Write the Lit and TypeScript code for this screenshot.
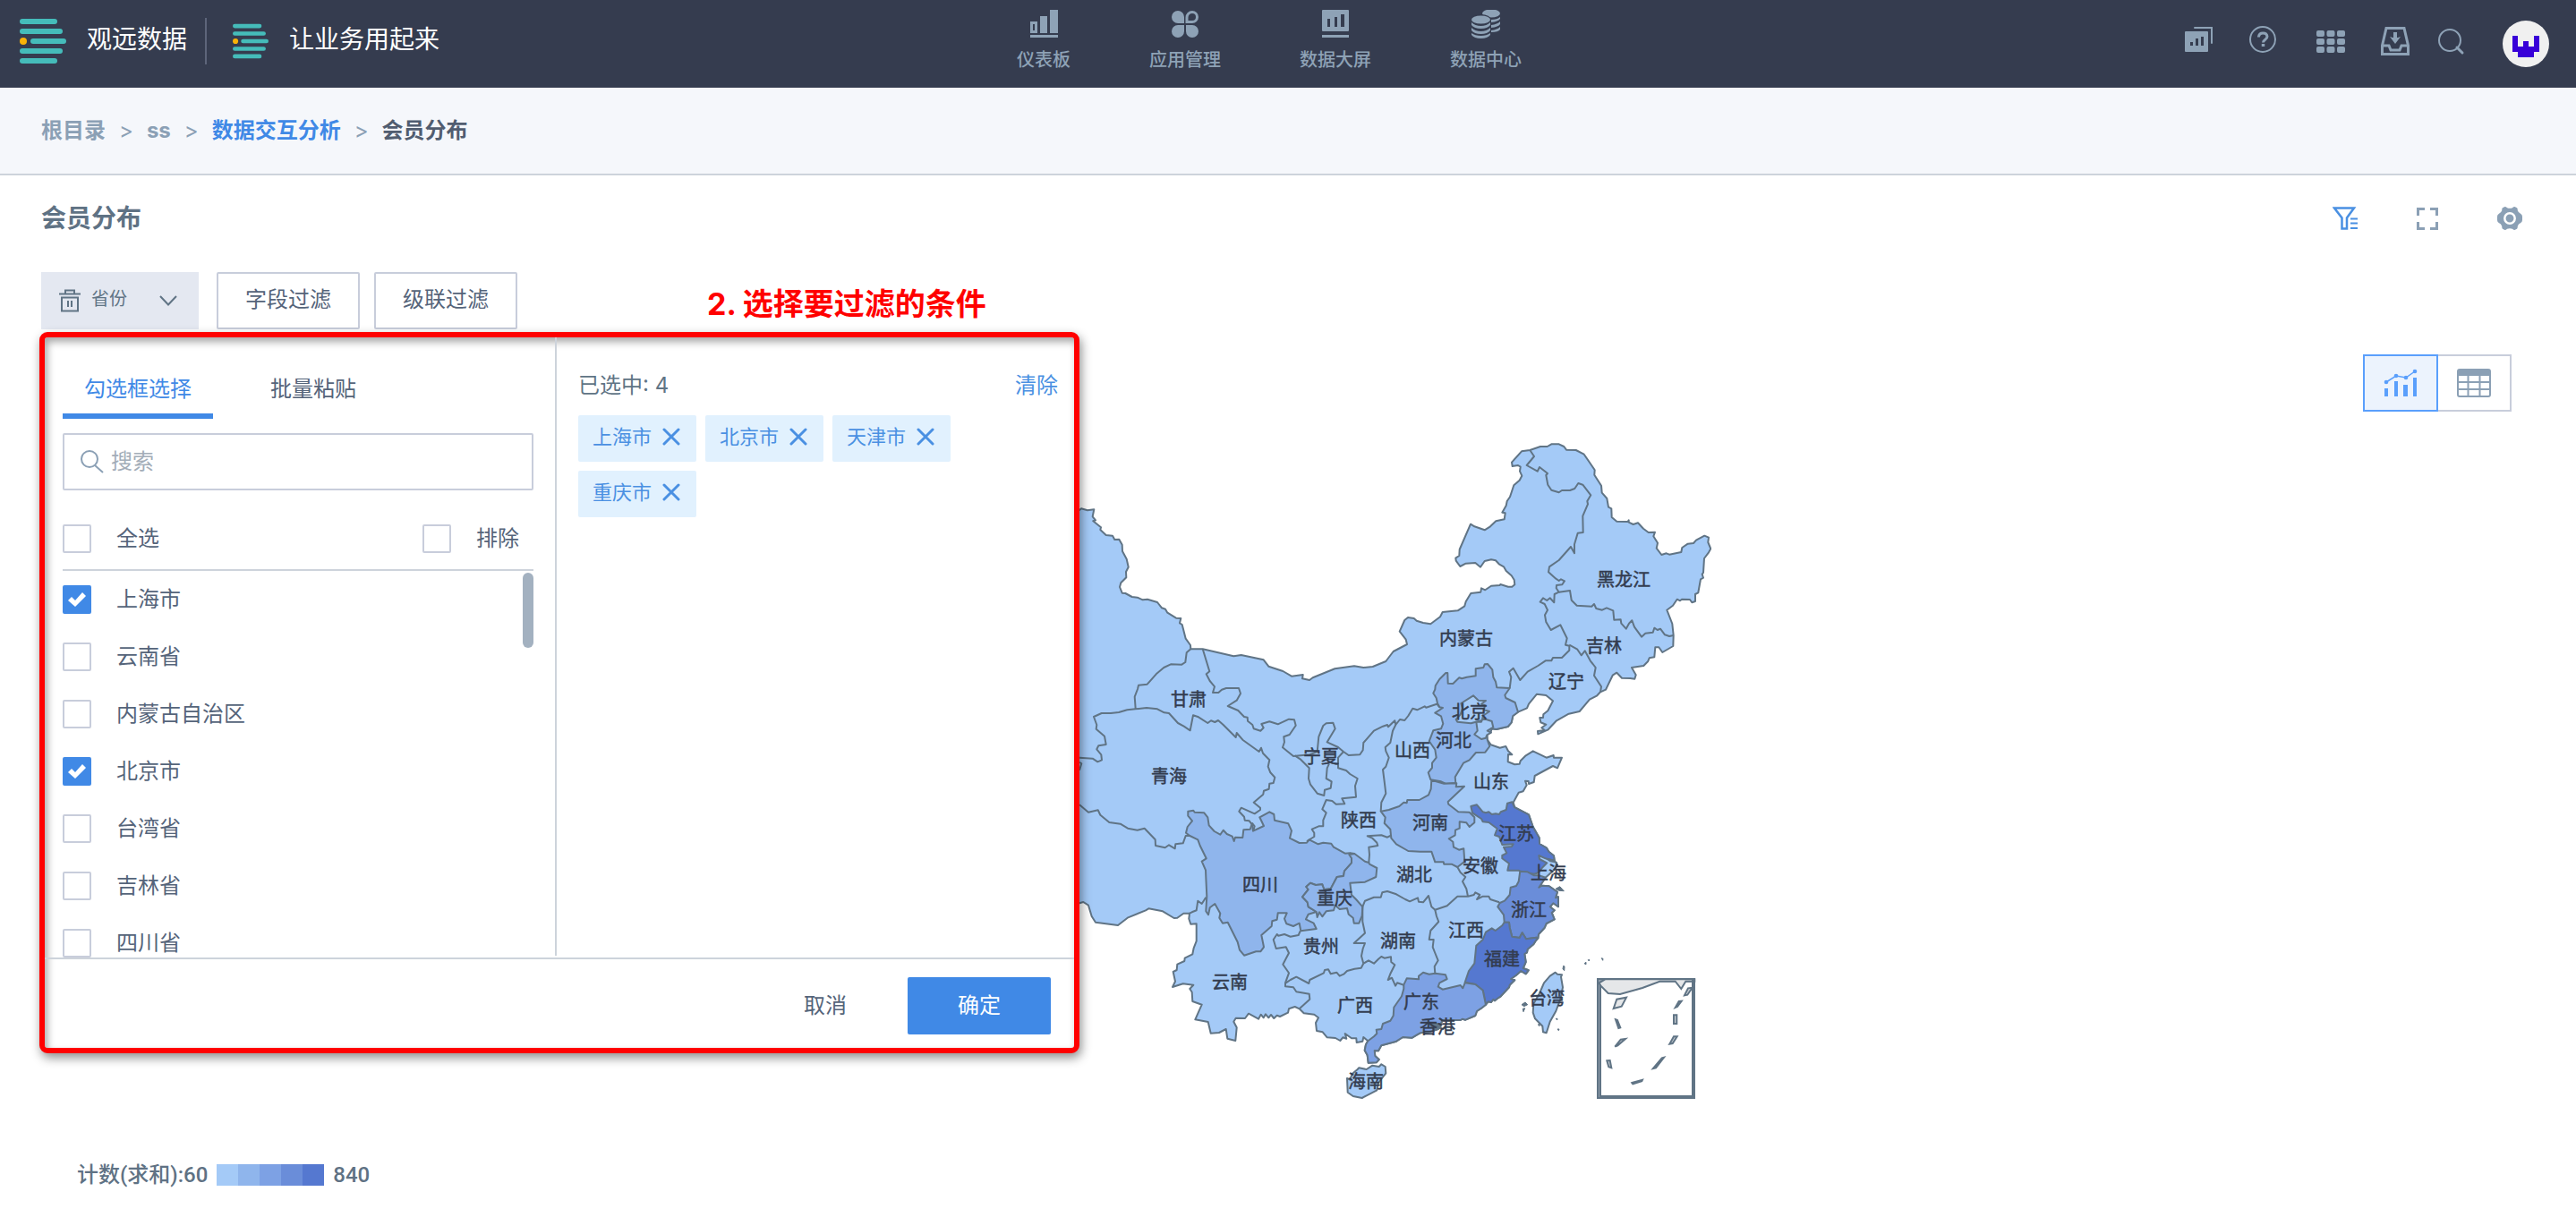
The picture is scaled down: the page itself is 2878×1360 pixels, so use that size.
import { LitElement, html, svg, css } from "lit";
import { customElement, property, state } from "lit/decorators.js";
import { classMap } from "lit/directives/class-map.js";

/* ---------- map geometry ---------- */

// Survey sheets: each has an origin on the map canvas, points are in thirds of a unit.
type Sheet = "W" | "N" | "E" | "S";
const ORIGIN: Record<Sheet, [number, number]> = {
  W: [1200, 540],
  N: [1560, 480],
  E: [1560, 820],
  S: [1280, 980],
};

// "W 18,90 24,85 N 12,678 ..." -> "1206,570 1208,568.3 ..."
function trace(source: string): string {
  let origin = ORIGIN.W;
  const out: string[] = [];
  for (const token of source.trim().split(/\s+/)) {
    if (token in ORIGIN) {
      origin = ORIGIN[token as Sheet];
      continue;
    }
    const [x, y] = token.split(",").map(Number);
    out.push(`${(origin[0] + x / 3).toFixed(1)},${(origin[1] + y / 3).toFixed(1)}`);
  }
  return out.join(" ");
}

const LEVELS = ["#a4caf7", "#8fb5ec", "#7da1e4", "#6a8dd9", "#5578d0"];

const MAINLAND = trace(`W -40,90 18,90 24,85 45,91 67,88 62,112 72,124 64,127 90,148 88,156 107,174 129,176 136,189 151,188
161,206 162,228 176,254 182,281 174,297 175,316 157,334 153,348 161,368 172,369 194,381 212,383 230,391 246,389 279,399
294,418 306,422 313,434 342,452 358,453 354,469 362,474 374,521 390,543 391,556 431,556 535,580 560,576 635,592 652,614
700,630 729,647 767,642 765,655 789,660 800,652 874,622 939,613 970,618 1001,615 1045,597 1070,564 1116,540 1112,524
1091,497 1108,459 1119,450 1139,453 1148,461 1170,468 1195,472
N 147,628 155,612 206,607 229,592 233,577 250,549 283,545 285,532 298,538 318,524 347,522 349,519 375,527 388,527 397,520
395,504 386,490 368,474 360,460 344,451 333,439 318,436 296,441 282,461 265,447 233,449 214,459 200,440 199,431 211,423
212,402 249,317 262,325 296,337 315,325 334,307 362,301 365,280 355,278 368,255 371,240 381,226 394,187 413,170 421,155
414,140 416,125 408,120 389,123 387,110 420,73 448,69 483,57 506,57 520,49 545,49 562,57 570,68 602,69 629,83 654,119
665,136 664,152 687,188 689,212 706,231 711,260 721,265 722,294 739,308 776,309 779,304 779,311 794,318 810,313 828,332
845,345 867,344 862,358 876,380 872,398 889,420 905,415 915,419 955,411 958,396 977,383 996,381 1005,371 1033,356
1047,362 1045,378 1054,400 1047,412 1032,432 1029,480 1025,485 1029,497 1020,502 1012,547 1002,552 1002,576 991,580
984,570 957,569 951,574 941,569 927,590 907,605 925,651 929,690 928,726 892,747 880,730 868,730 865,763 848,766 843,778
829,792 789,798 803,823 799,836 784,834 756,833 739,815 725,824 702,872 684,880 673,892 648,905 614,945 578,953 537,976
509,1006 475,1021 474,1011 497,1008 487,1000 502,989 484,982 481,966 492,966 493,955 508,943 525,910 502,891 471,887
444,920 438,934 408,947 391,960 386,982 374,996 335,1005 320,1003 316,1014 304,1020 305,1040 317,1057 347,1067 367,1062
375,1078 388,1090 375,1089 374,1114 397,1123 413,1121 416,1111 434,1093 458,1078 503,1100 527,1092 528,1100 555,1100
E 540,115 525,108 464,141 461,162 444,168 443,159 432,158 437,172 425,193 410,197 392,230 397,247 444,271 458,312 479,349
480,369 504,383 511,395 528,409 530,425 540,440 530,455 500,482 478,515 488,509 512,511 540,530 534,550 543,547 543,580
526,568 515,580 530,592 521,600 530,622 503,636 497,650 477,672 475,685 468,693 460,706 440,722 438,733 430,738 434,765
425,786 443,793 434,805 418,795 401,810 384,822 397,826 380,842 378,850 350,880 338,888 330,895 325,890 318,900 308,898
300,908 285,920 270,930 265,945 232,959 222,956 215,960 155,960 140,990 110,1000 80,1003 68,1010 53,1019 22,1017 0,1031
S 790,565 780,583 767,582 769,600 782,612 773,622 746,623 743,598 734,581 738,562 745,550 730,537 727,551 707,555
706,541 690,541 668,525 673,542 661,538 652,549 636,540 608,538 593,520 573,516 570,489 579,472 565,461 530,457 515,442
500,435 480,442 477,455 450,468 440,464 430,474 420,462 412,472 402,460 395,472 386,461 378,476 345,458 333,474 302,473
295,485 305,505 301,549 274,542 269,510 246,522 218,524 209,486 166,478 188,428 157,417 155,386 148,375 160,362 125,358
90,369 99,350 92,318 104,312 106,293 130,282 131,272 157,259 161,238 170,215 170,157 151,158 145,140 147,122 127,122
106,137 95,138 57,115 10,106 W 240,1432 179,1457 147,1482 72,1472 59,1452 48,1415 31,1404 18,1408 -40,1404`);

interface Region {
  level: number;
  points: string;
}

const REGIONS: Region[] = [
  { level: 1, points: trace(`N 172,816 166,816 145,837 131,859 130,871 124,884 134,900 138,918 145,931 156,933 130,950 150,961
    157,986 150,1003 124,1009 110,1045 130,1073 134,1100 120,1118 120,1134 107,1150 115,1174 150,1180 165,1187 199,1185
    197,1165 225,1118 245,1108 267,1083 298,1082 313,1062 305,1040 304,1020 316,1014 320,1003 335,1005 374,996 386,982
    391,960 408,947 398,915 367,900 364,890 380,867 337,865 333,845 325,830 322,805 306,786 296,787 292,798 266,802
    266,826 236,830 220,835 211,832 190,852 173,851`) },
  { level: 0, points: trace(`N 258,892 275,908 300,909 285,920 297,925 294,940 312,945 290,960 288,975 250,985 205,980 200,972
    215,955 222,935 217,918`) },
  { level: 0, points: trace(`N 262,1022 272,1010 268,980 285,980 290,968 320,978 325,998 305,1010 318,1016 304,1024 300,1034 285,1038`) },
  { level: 1, points: trace(`W 382,1100 400,1097 404,1103 436,1105 448,1120 452,1147 470,1167 490,1178 500,1163 512,1176
    530,1184 536,1200 540,1187 565,1188 568,1162 590,1160 597,1140 605,1150 600,1166 636,1149 622,1120 655,1102 670,1110
    672,1130 718,1141 729,1165 723,1190 755,1206 780,1205 788,1195 818,1210 835,1205 862,1208 870,1220 908,1241 925,1240
    930,1257 930,1273 906,1300 903,1317 881,1320 860,1360 838,1362 832,1345 810,1347 792,1340 778,1353 785,1362 765,1387
    782,1405 785,1420 812,1437
    S 545,125 537,142 563,155 572,174 520,181 515,155 495,165 472,157 465,140 473,121 443,121 440,143 424,148 422,165
    388,195 396,235 385,250 370,250 330,263 315,245 308,218 275,152 258,155 247,137 250,122 232,90 215,103 210,127
    202,115 205,65 W 442,1320 441,1297 428,1268 443,1258 422,1215 415,1195 388,1182 375,1172 380,1152 396,1132 382,1115`) },
  { level: 1, points: trace(`W 881,1320 903,1317 906,1300 930,1273 930,1257 922,1245 940,1242 975,1268 988,1272 990,1277
    1015,1290 1012,1320 975,1337 925,1340 930,1380 945,1395 967,1420 965,1450 955,1475 938,1475 935,1457 920,1445
    915,1425 890,1428 875,1415 870,1432 845,1435 832,1453 822,1438 815,1455 812,1437 785,1420 782,1405 765,1387 785,1362
    778,1353 792,1340 810,1347 832,1345 838,1362 860,1360`) },
  { level: 1, points: trace(`E 118,155 160,167 202,166 200,178 228,176 173,228 175,236 208,262 245,263 262,280 262,298 245,312
    235,298 212,295 212,317 198,323 197,340 176,352 190,362 192,380 210,389 226,385 229,428 205,447 185,437 160,437
    158,430 130,430 118,395 80,395 40,393 0,370 W 1063,1190 1060,1160 1040,1140 1043,1120 1028,1100 1055,1095 1090,1083
    1105,1070 1115,1072 1117,1062 E 77,222 108,205 116,185`) },
  { level: 4, points: trace(`E 250,243 270,238 290,262 300,265 310,262 320,270 333,268 345,270 350,262 368,255 372,233 388,229
    396,246 444,271 458,312 479,349 480,369 504,383 511,395 528,409 530,425 500,418 478,408 480,420 505,433 488,450
    478,465 462,470 415,461 410,458 373,458 378,435 355,418 355,408 370,400 360,380 387,378 392,370 355,372 345,345
    330,340 338,318 310,297 290,295 285,285 255,265`) },
  { level: 3, points: trace(`E 415,461 440,463 462,475 478,475 500,482 478,515 488,509 512,511 540,530 534,550 543,547 543,580
    526,568 515,580 530,592 521,600 530,622 503,636 497,650 477,672 475,685 470,683 435,688 422,667 413,684 388,680
    380,650 378,632 362,632 360,607 340,580 347,567 363,560 380,540 383,515 402,510 410,495`) },
  { level: 4, points: trace(`E 378,632 380,650 388,680 413,684 422,667 435,688 470,683 475,685 468,693 460,706 440,722 438,733
    430,738 434,765 425,786 443,793 434,805 418,795 401,810 384,822 397,826 380,842 378,850 350,880 338,888 330,895
    325,890 318,900 308,898 300,908 290,860 265,840 230,833 243,795 262,770 268,710 290,690 300,665 320,652 332,660
    355,643 362,632`) },
  { level: 2, points: trace(`E 300,908 285,920 270,930 265,945 232,959 222,956 215,960 155,960 140,990 110,1000 80,1003 68,1010
    53,1019 22,1017 0,1031 S 790,565 780,583 767,582 769,600 782,612 773,622 746,623 743,598 734,581 738,562 745,550
    765,535 775,525 773,512 790,510 795,492 820,482 830,465 832,437 858,400 865,375 865,362
    E 35,820 75,823 75,812 90,800 110,806 130,803 165,808 170,822 145,835 140,848 155,857 215,843 223,853 230,835 265,840
    290,860`) },
  { level: 0, points: trace(`S 675,675 685,680 692,660 710,645 715,640 740,645 760,632 782,636 790,628 803,636 805,658 780,690
    775,715 740,733 725,741 695,735 677,722`) },
  { level: 0, points: trace(`E 533,800 540,806 555,808 552,815 558,850 550,890 535,930 515,965 503,1003 492,1000 490,980
    465,955 458,935 460,905 480,870 495,835 515,812`) },
];

const BORDERS: string[] = [
  "W 391,556 377,568 373,600 361,608 324,607 301,618 275,640 245,674 216,677 213,690 203,716 206,757",
  `W 18,920 62,923 79,934 93,928 91,910 76,892 82,880 107,876 102,848 74,824 76,810 66,783 92,771 123,771 150,768 178,760
   206,757 243,753 279,757 302,769 318,771 348,804 368,815 389,829 399,778 417,784 448,804 459,796 472,801 483,795 500,810
   542,852 545,837 565,860 620,900 627,887 633,905 655,928 650,950 658,970 673,986 668,1005 655,1007 653,1025 636,1031
   634,1043 602,1070 624,1088 624,1095 605,1108 560,1088 553,1100 570,1118 572,1130 587,1132 597,1145 600,1166`,
  `W 18,1078 48,1103 80,1096 88,1112 118,1137 155,1142 180,1157 212,1163 236,1157 272,1195 273,1215 305,1222 318,1213
   338,1225 340,1210 365,1207 374,1182 388,1182`,
  "W 18,935 25,940 18,962",
  `W 431,556 454,631 443,640 455,663 471,682 465,702 484,702 495,692 510,687 552,687 558,705 545,728 515,747 550,762
   570,783 581,785 582,797 598,810 602,823 625,830 635,820 628,807 655,799 683,808 720,791 738,793 743,812 722,843 703,850
   705,868 699,886 735,915 790,910 815,900 820,850 835,813 845,805 868,803 875,823 848,868 885,885 903,900 920,912 958,910
   968,895 970,870 1005,830 1035,815 1050,810 1053,817 1075,796 1078,810 1092,792
   N 28,975 40,960 55,935 70,940 95,928 100,932 136,920 145,931`,
  "W 1078,810 1068,830 1060,870 1043,885 1045,898 1055,920 1045,950 1035,960 1040,1000 1045,1040 1030,1070 1028,1100",
  `W 740,913 758,925 788,955 786,990 792,1010 815,1040 838,1047 840,1028 860,1022 863,1000 845,990 848,955 855,940`,
  `W 903,900 885,920 885,955 912,963 925,975 950,990 942,1015 945,1052 898,1057 907,1075 878,1076 865,1065 845,1062
   832,1093 845,1105 835,1130 835,1150 820,1150 797,1160 805,1172 805,1185 780,1200`,
  "W 1060,1182 1050,1187 1030,1180 983,1183 1000,1190 1015,1205 1018,1215 988,1220 990,1245 988,1272",
  "W 925,1240 940,1242",
  `W 967,1420 975,1400 1005,1388 1028,1388 1033,1372 1050,1368 1080,1378
   E 30,555 45,562 72,550 75,563 90,565 108,543 118,580 130,590`,
  "E 205,447 215,465 232,480 222,495 235,520 240,545",
  "E 130,590 170,577 205,545 240,545 260,540 265,532 280,540 270,555 290,545 310,545 315,555 345,565",
  "E 130,590 135,612 142,630 115,660 110,690 125,690 122,715 130,735 140,760 128,780 130,803",
  "S 727,100 727,150 735,188 698,222 735,222 728,240 723,265 730,290",
  `S 730,290 722,305 700,308 675,315 665,325 650,332 640,320 620,325 612,310 600,312 597,322 550,345 547,357 505,335
   485,345 470,355`,
  "S 518,181 512,195 485,200 465,192 445,197 440,192 428,210 437,240 470,235 480,255 460,293 480,322 468,355 468,367 495,370 505,385 548,392 550,410 530,428 515,442",
  "S 730,290 747,280 765,290 780,275 790,267 800,272 822,268 823,285 835,295 820,325 812,345 825,338 837,365 843,355 865,362",
  "S 147,122 155,118 170,112 175,80 188,90 202,68",
  `N 448,69 462,90 437,120 473,140 480,126 507,147 502,153 508,185 520,203 545,211 555,204 582,204 598,198 610,180 625,185
   652,220 640,240 642,250 625,290 626,345 608,347 597,385 597,415 585,393 545,438 513,460 510,478 535,500 545,507
   552,502 564,508 556,520 537,522 536,532 545,545 530,552 529,580 515,565 505,573 492,565 482,578 497,585 507,605
   498,622 502,645 518,672 550,655 572,700 567,722 580,725 580,740 555,765 525,765 520,775 500,775 475,792 440,812
   415,840 392,800 378,812 385,830 380,867`,
  `N 545,545 582,540 587,572 605,590 655,593 663,585 670,600 690,605 705,598 727,607 730,638 752,637 754,650 770,668
   780,650 790,640 798,662 822,695 835,683 860,680 865,665 875,672 885,668 900,688 915,693 929,690`,
  "N 580,722 607,737 620,757 632,742 650,775 668,798 663,825 687,862 684,880",
].map(trace);

// Islands and specks small enough to be all outline.
const ISLETS: string[] = [
  "E 534,520 548,512 562,527 545,526",
  "E 105,968 150,972 150,988 125,992 115,980",
  "E 500,418 522,422 540,432 515,428",
  "E 420,908 432,900 440,908 428,914",
  "E 424,922 431,920 426,932",
  "E 560,778 564,780 563,794 558,788",
  "E 630,770 636,766 636,773",
  "E 643,758 647,757 646,762",
  "E 688,752 693,754 692,760",
  "E 535,955 540,955 539,960",
  "E 540,990 546,990 544,995",
  "E 475,975 480,972 480,980",
].map(trace);

const INSET_DASHES: string[] = [
  "E 735,958 741,960 751,985 745,987",
  "E 733,1049 752,1025 768,1023 742,1045",
  "E 706,1096 716,1095 721,1120 712,1117",
  "E 790,1170 825,1160 823,1165 793,1174",
  "E 861,1122 890,1087 897,1085 870,1120",
  "E 916,1040 930,1015 941,1015 926,1038",
  "E 930,943 940,943 940,972 930,972",
  "E 935,918 947,897 956,896 942,915",
  "E 966,877 978,853 992,851 976,875",
].map(trace);

const INSET_ISLAND = trace("E 728,921 739,890 771,884 755,914");
const INSET_COAST = trace("E 680,835 700,823 1000,823 1000,830 970,830 955,855 935,830 883,830 825,852 750,873 710,870 684,844");

const PLACES: [string, number, number][] = [
  ["甘肃", 1328, 781], ["青海", 1306, 867], ["宁夏", 1476, 845], ["山西", 1578, 838], ["陕西", 1518, 916],
  ["河南", 1598, 919], ["湖北", 1580, 977], ["四川", 1408, 988], ["重庆", 1491, 1003], ["内蒙古", 1638, 713],
  ["黑龙江", 1814, 647], ["吉林", 1792, 721], ["辽宁", 1750, 761], ["北京", 1642, 795], ["河北", 1624, 827],
  ["山东", 1666, 873], ["江苏", 1694, 931], ["安徽", 1654, 967], ["上海", 1730, 975], ["浙江", 1708, 1016],
  ["江西", 1638, 1039], ["福建", 1678, 1071], ["台湾", 1728, 1115], ["广东", 1588, 1119], ["香港", 1606, 1147],
  ["贵州", 1476, 1057], ["湖南", 1562, 1051], ["云南", 1374, 1097], ["广西", 1514, 1123], ["海南", 1526, 1208],
];

const FONT = css`Inter, "Noto Sans CJK SC", sans-serif`;

@customElement("member-map")
class MemberMap extends LitElement {
  static styles = css`
    :host { display: block; }
    .canvas { display: block; width: 100%; max-width: 946px; margin: 0 auto; }
    .land { stroke: #607485; stroke-width: 2; stroke-linejoin: round; }
    .border { fill: none; stroke: #607485; stroke-width: 2; stroke-linejoin: round; }
    .islet { fill: #607485; stroke: #607485; stroke-width: 1; }
    .frame { fill: none; stroke: #607485; stroke-width: 2; }
    .gutter { fill: none; stroke: #8f9dab; stroke-width: 3; }
    .coast { fill: #e5e7e9; stroke: #607485; stroke-width: 2; }
    .dash { fill: #c6ccd2; stroke: #607485; stroke-width: 2; }
    .place { font: 400 20px ${FONT}; fill: #333c4f; stroke: #333c4f; stroke-width: 0.5; text-anchor: middle; }
  `;

  render() {
    return html`
      <svg class="canvas" viewBox="966 480 946 760" role="img" aria-label="会员分布">
        <polygon class="land" fill=${LEVELS[0]} points=${MAINLAND}></polygon>
        ${REGIONS.map((r) => svg`<polygon class="land" fill=${LEVELS[r.level]} points=${r.points}></polygon>`)}
        ${BORDERS.map((b) => svg`<polyline class="border" points=${b}></polyline>`)}
        ${ISLETS.map((p) => svg`<polygon class="islet" points=${p}></polygon>`)}
        <rect class="gutter" x="1787" y="1096" width="105" height="130"></rect>
        <polygon class="coast" points=${INSET_COAST}></polygon>
        <rect class="frame" x="1785" y="1094" width="108" height="133"></rect>
        <path class="frame" d="M1788 1100V1225H1891V1095"></path>
        <polygon class="coast" points=${INSET_ISLAND}></polygon>
        ${INSET_DASHES.map((p) => svg`<polygon class="dash" points=${p}></polygon>`)}
        ${PLACES.map(([name, x, y]) => svg`<text class="place" x=${x} y=${y + 8}>${name}</text>`)}
      </svg>
    `;
  }
}

/* ---------- filter popup ---------- */

@customElement("filter-popup")
class FilterPopup extends LitElement {
  @property({ type: Array }) options: string[] = [];
  @state() private picked: string[] = ["上海市", "北京市", "天津市", "重庆市"];

  static styles = css`
    :host {
      display: block;
      box-sizing: border-box;
      background: #fff;
      border: 6px solid #f00;
      border-radius: 9px;
      font-family: ${FONT};
      font-size: 24px;
      line-height: 36px;
      color: #55647a;
      box-shadow: 2px 5px 12px rgba(0, 0, 0, 0.45), inset 3px 5px 8px rgba(0, 0, 0, 0.35);
    }
    button, input { font: inherit; color: inherit; margin: 0; }
    button { padding: 0; border: 0; background: none; cursor: pointer; }
    .panes { display: flex; height: 693px; border-bottom: 2px solid #cdd3db; }
    .choose { flex: 0 0 570px; box-sizing: border-box; padding: 28px 24px 0 20px; display: flex; flex-direction: column; }
    .chosen { flex: 1; border-left: 2px solid #cdd3db; margin-bottom: 2px; padding: 36px 18px 0 24px; }
    .tabs { display: flex; gap: 40px; }
    .tab { padding: 12px 24px 10px; border-bottom: 6px solid transparent; height: 63px; box-sizing: border-box; }
    .tab.current { color: #4089e6; border-bottom-color: #4089e6; }
    .search { display: flex; align-items: center; gap: 8px; box-sizing: border-box; height: 64px; margin-top: 16px; padding: 0 18px; border: 2px solid #c8cddb; border-radius: 2px; }
    .search svg { flex: none; }
    .search input { flex: 1; min-width: 0; border: 0; outline: 0; padding: 0; background: none; }
    .search input::placeholder { color: #a3adb8; opacity: 1; }
    .all { display: flex; justify-content: space-between; padding: 36px 16px 16px 0; border-bottom: 2px solid #cdd3db; }
    .check { display: flex; align-items: center; gap: 28px; line-height: 36px; cursor: pointer; }
    .box { appearance: none; flex: none; box-sizing: border-box; width: 32px; height: 32px; border: 2px solid #c8cddb; border-radius: 2px; background: #fff; display: grid; place-items: center; }
    .box:checked { background: #4089e6; border-color: #4089e6; }
    .box:checked::before { content: ""; width: 20px; height: 16px; background: #fff; clip-path: polygon(0 9px, 4px 5px, 8px 9px, 16px 0, 20px 4px, 8px 16px); }
    .list { position: relative; flex: 1; min-height: 0; overflow: hidden; margin: 0; padding: 0; list-style: none; }
    .row { height: 64px; display: flex; align-items: center; }
    .thumb { position: absolute; right: 0; top: 2px; width: 12px; height: 84px; border-radius: 6px; background: #a3b1c0; }
    .summary { display: flex; justify-content: space-between; color: #607485; }
    .clear { color: #4a90e2; }
    .tags { display: flex; flex-wrap: wrap; gap: 10px; margin: 15px 0 0 0; }
    .tag { display: flex; gap: 12px; height: 52px; box-sizing: border-box; padding: 8px 18px 12px 16px; background: #e1f1fe; border-radius: 2px; color: #4a90e2; font-size: 22px; line-height: 32px; }
    .drop { display: flex; align-items: center; }
    .foot { display: flex; justify-content: flex-end; align-items: center; gap: 68px; padding: 20px 26px 15px; }
    .ok { width: 160px; height: 64px; background: #4089e6; color: #fff; border-radius: 2px; }
  `;

  private toggle(name: string) {
    this.picked = this.picked.includes(name) ? this.picked.filter((p) => p !== name) : [...this.picked, name];
  }

  render() {
    return html`
      <div class="panes">
        <section class="choose">
          <div class="tabs" role="tablist">
            <button class="tab current" role="tab" aria-selected="true">勾选框选择</button>
            <button class="tab" role="tab" aria-selected="false">批量粘贴</button>
          </div>
          <label class="search">
            <svg width="26" height="26" viewBox="0 0 26 26" fill="none" stroke="#8ba0b5" stroke-width="2" aria-hidden="true">
              <circle cx="10" cy="10" r="9"></circle>
              <path d="M16 17L25 25"></path>
            </svg>
            <input type="search" placeholder="搜索" aria-label="搜索" />
          </label>
          <div class="all">
            <label class="check"><input class="box" type="checkbox" />全选</label>
            <label class="check"><input class="box" type="checkbox" />排除</label>
          </div>
          <ul class="list">
            ${this.options.map(
              (name) => html`<li class="row">
                <label class="check">
                  <input class="box" type="checkbox" .checked=${this.picked.includes(name)} @change=${() => this.toggle(name)} />${name}
                </label>
              </li>`
            )}
            <li class="thumb" role="presentation"></li>
          </ul>
        </section>
        <section class="chosen">
          <div class="summary">
            <span>已选中: ${this.picked.length}</span>
            <button class="clear" @click=${() => (this.picked = [])}>清除</button>
          </div>
          <div class="tags">
            ${this.picked.map(
              (name) => html`<span class="tag">${name}<button class="drop" aria-label=${name} @click=${() => this.toggle(name)}>
                <svg width="20" height="20" viewBox="0 0 20 20" stroke="#4a90e2" stroke-width="3" stroke-linecap="round" aria-hidden="true">
                  <path d="M2 2L18 18M18 2L2 18"></path>
                </svg>
              </button></span>`
            )}
          </div>
        </section>
      </div>
      <footer class="foot">
        <button>取消</button>
        <button class="ok">确定</button>
      </footer>
    `;
  }
}

/* ---------- page ---------- */

const logo = (width: number, height: number) => html`
  <svg width=${width} height=${height} viewBox="0 0 52 50" aria-hidden="true">
    <g fill="#45bcba">
      <rect x="0" y="0" width="42" height="6" rx="3"></rect>
      <rect x="0" y="11" width="48" height="6" rx="3"></rect>
      <rect x="12" y="22" width="40" height="6" rx="3"></rect>
      <rect x="0" y="33" width="48" height="6" rx="3"></rect>
      <rect x="0" y="44" width="42" height="6" rx="3"></rect>
    </g>
    <circle cx="4" cy="25" r="4" fill="#f9b208"></circle>
  </svg>
`;

const NAV = [
  {
    label: "仪表板",
    icon: svg`<path fill-rule="evenodd" d="M1 13h8v13H1zM4 16v7h2v-7z"></path><path d="M12 7h8v19h-8zM23 0h9v26h-9zM1 28h31v3H1z"></path>`,
  },
  {
    label: "应用管理",
    icon: svg`<path d="M8 1a7 7 0 0 1 7 7v7H8A7 7 0 0 1 8 1zM8 31a7 7 0 0 0 7-7v-7H8a7 7 0 0 0 0 14zM24 31a7 7 0 0 1-7-7v-7h7a7 7 0 0 1 0 14z"></path>
      <path d="M24 2.500a6 6 0 0 0-6 6v5h6a5.500 5.500 0 0 0 0-11z" fill="none" stroke="#8ea2b6" stroke-width="3"></path>`,
  },
  {
    label: "数据大屏",
    icon: svg`<path fill-rule="evenodd" d="M2 0h28a1 1 0 0 1 1 1v22a1 1 0 0 1-1 1H2a1 1 0 0 1-1-1V1a1 1 0 0 1 1-1zM7 10v9h3v-9zM15 8v11h3V8zM22 5v14h4V5z"></path><path d="M1 28h30v3H1z"></path>`,
  },
  {
    label: "数据中心",
    icon: svg`<ellipse cx="22" cy="4" rx="10" ry="4.500"></ellipse>
      <path d="M22 11q7 0 10-3v2q-2 3-10 4zM22 17q7-1 10-4v3q-2 3-10 4zM22 23q7-1 10-4v3q-2 3-10 3z"></path>
      <ellipse cx="10.500" cy="11" rx="11.500" ry="6" fill="#353c4f"></ellipse>
      <ellipse cx="10.500" cy="11" rx="10.500" ry="4.500"></ellipse>
      <path d="M0 14q4 4 10.500 4T21 14v3q-3 4-10.500 4T0 17zM0 20q4 4 10.500 4T21 20v3q-3 4-10.500 4T0 23zM0 26q4 3 10.500 3T21 26v2q-3 4-10.500 4T0 28z"></path>`,
  },
];

@customElement("app-root")
class AppRoot extends LitElement {
  @state() private view: "chart" | "table" = "chart";

  private options = ["上海市", "云南省", "内蒙古自治区", "北京市", "台湾省", "吉林省", "四川省"];

  static styles = css`
    :host { display: block; min-height: 100vh; background: #fff; font-family: ${FONT}; font-size: 24px; line-height: 36px; color: #55647a; }
    * { box-sizing: border-box; }
    button { font: inherit; color: inherit; margin: 0; padding: 0; border: 0; background: none; cursor: pointer; }
    a { color: inherit; text-decoration: none; }
    svg { display: block; }

    .top { display: flex; align-items: center; height: 98px; padding: 0 30px 0 22px; background: #353c4f; }
    .brand { flex: 1; display: flex; align-items: center; padding-bottom: 6px; color: #fff; font-size: 28px; line-height: 40px; }
    .name { margin: 0 20px 0 23px; padding-bottom: 4px; }
    .bar { width: 2px; height: 52px; margin-right: 29px; background: #5d657a; }
    .nav { display: flex; gap: 88px; margin-right: 34px; color: #8ea2b6; font-size: 20px; line-height: 28px; font-weight: 500; }
    .entry { display: flex; flex-direction: column; align-items: center; gap: 10px; padding-bottom: 6px; }
    .tools { flex: 1; display: flex; justify-content: flex-end; align-items: center; gap: 40px; }
    .tools .near { margin-left: -8px; }

    .crumbs { display: flex; align-items: center; gap: 15px; height: 98px; padding: 0 46px; background: #f5f7fb; border-bottom: 2px solid #cdd3db; color: #8ba0b5; }
    .crumbs a, .here { font-weight: 700; }
    .crumbs .link { color: #4089e6; }
    .crumbs .here { color: #515d70; }

    .titlebar { display: flex; align-items: center; justify-content: space-between; height: 96px; padding: 0 60px 0 46px; }
    .title { margin: 0; font-size: 28px; line-height: 40px; font-weight: 700; color: #5f7284; }
    .actions { display: flex; gap: 66px; }

    .filters { position: relative; display: flex; height: 64px; margin: 12px 46px 0; }
    .field { display: flex; align-items: center; width: 176px; padding: 0 24px 0 20px; background: #e4e8f1; color: #607485; font-size: 20px; }
    .field span { flex: 1; padding: 0 0 4px 12px; text-align: left; }
    .outlined { width: 160px; margin-left: 16px; padding-bottom: 2px; border: 2px solid #c8cddb; border-radius: 2px; }
    .field + .outlined { margin-left: 20px; }
    .popup { position: absolute; left: -2px; top: 67px; width: 1162px; z-index: 2; }
    .note { position: absolute; left: 744px; top: 12px; margin: 0; color: #f00; font-size: 34px; line-height: 48px; font-weight: 700; white-space: nowrap; }

    .views { display: flex; justify-content: flex-end; padding: 28px 72px 20px; }
    .view { display: grid; place-items: center; width: 84px; height: 64px; border: 2px solid #c8cddb; color: #8ba0b5; }
    .view + .view { border-left: 0; width: 82px; }
    .view.on { background: #ecf3fd; border: 2px solid #5a9ffc; color: #5a9ffc; }

    .legend { display: flex; align-items: center; gap: 10px; margin-top: 55px; padding: 0 86px; color: #5f7284; font-family: Roboto, "Noto Sans CJK SC", sans-serif; font-weight: 500; }
    .scale { display: flex; }
    .step { width: 24px; height: 24px; }
  `;

  render() {
    return html`
      <header class="top">
        <div class="brand">
          ${logo(52, 50)}
          <span class="name">观远数据</span>
          <span class="bar"></span>
          ${logo(40, 40)}
          <span class="name">让业务用起来</span>
        </div>
        <nav class="nav">
          ${NAV.map(
            (n) => html`<a class="entry" href="#">
              <svg width="32" height="32" viewBox="0 0 32 32" fill="#8ea2b6" aria-hidden="true">${n.icon}</svg>
              ${n.label}
            </a>`
          )}
        </nav>
        <div class="tools">
          <button aria-label="看板">
            <svg width="32" height="40" viewBox="0 0 32 40" fill="#8ea2b6">
              <path fill-rule="evenodd" d="M1 6h24a1 1 0 0 1 1 1v21a1 1 0 0 1-1 1H1a1 1 0 0 1-1-1V7a1 1 0 0 1 1-1zM6 18v4h3v-4zM12 14v8h3v-8zM18 12v10h3V12z"></path>
              <path d="M11 2H30V19" fill="none" stroke="#8ea2b6" stroke-width="2" stroke-linecap="round"></path>
            </svg>
          </button>
          <button aria-label="帮助">
            <svg width="35" height="40" viewBox="0 0 35 40" fill="none" stroke="#8ea2b6">
              <circle cx="15" cy="15" r="14" stroke-width="2"></circle>
              <path d="M10.500 12.500V12q.500-4 4.800-4t4.700 3.800q0 2-2.500 3.700-2 1.300-2 3" stroke-width="3"></path>
              <path d="M15.500 20v3" stroke-width="3.500"></path>
            </svg>
          </button>
          <button aria-label="应用">
            <svg width="32" height="40" viewBox="0 0 32 40" fill="#8ea2b6">
              ${[0, 1, 2].map((r) => [0, 1, 2].map((c) => svg`<rect x=${c * 11.5} y=${5 + r * 9} width="9" height="7" rx="2"></rect>`))}
            </svg>
          </button>
          <button aria-label="下载">
            <svg width="32" height="40" viewBox="0 0 32 40" fill="none" stroke="#8ea2b6" stroke-width="3">
              <path d="M1.500 31.500V22L6 2.500H26L30.500 22V31.500Z"></path>
              <path d="M2 22h7l2 5h10l2-5h7" stroke-width="3"></path>
              <path d="M16 7v8" stroke-width="4"></path>
              <path d="M10 12l6 8 6-8-3 1h-6z" fill="#8ea2b6" stroke="none"></path>
            </svg>
          </button>
          <button class="near" aria-label="搜索">
            <svg width="32" height="40" viewBox="0 0 32 40" fill="none" stroke="#8ea2b6" stroke-width="2">
              <circle cx="13" cy="16" r="12"></circle>
              <path d="M21 24l6 6" stroke-width="3" stroke-linecap="round"></path>
            </svg>
          </button>
          <button aria-label="账户">
            <svg width="52" height="52" viewBox="0 0 52 52">
              <circle cx="26" cy="23" r="26" fill="none"></circle>
              <circle cx="26" cy="26" r="26" fill="#f0f0f0"></circle>
              <path d="M11 17h6v12h6v-6h6v6h6V17h6v18h-6v6H17v-6h-6z" fill="#3800d8"></path>
            </svg>
          </button>
        </div>
      </header>

      <nav class="crumbs">
        <a href="#">根目录</a><span>&gt;</span><a href="#">ss</a><span>&gt;</span>
        <a class="link" href="#">数据交互分析</a><span>&gt;</span><span class="here">会员分布</span>
      </nav>

      <main>
        <div class="titlebar">
          <h1 class="title">会员分布</h1>
          <div class="actions">
            <button aria-label="筛选">
              <svg width="28" height="26" viewBox="0 0 28 26" fill="none" stroke="#4a90e2" stroke-width="2">
                <path d="M2 1.500H24L16 12.500V24.500H10.500V12.500Z" stroke-width="2.500"></path>
                <path d="M20 13.500h8M20 18.500h8M20 24h8"></path>
              </svg>
            </button>
            <button aria-label="全屏">
              <svg width="24" height="26" viewBox="0 0 24 26" fill="none" stroke="#8ba0b5" stroke-width="3">
                <path d="M9 2.500H1.500V10M15 2.500H22.500V10M9 24.500H1.500V17M15 24.500H22.500V17"></path>
              </svg>
            </button>
            <button aria-label="设置">
              <svg width="28" height="26" viewBox="0 0 28 26" fill="#8ba0b5">
                <path d="M8.500 0Q10 0 11 1.300Q14 2.300 17 1.300Q18 0 19.500 0L22 1.300Q23 2.300 22.700 4Q23.500 6.800 26.300 8Q28 9 28 11V15Q28 17 26.300 18Q23.500 19.200 22.700 22Q23 23.700 22 24.700L19.500 26Q18 26 17 24.700Q14 23.700 11 24.700Q10 26 8.500 26L6 24.700Q5 23.700 5.300 22Q4.500 19.200 1.700 18Q0 17 0 15V11Q0 9 1.700 8Q4.500 6.800 5.300 4Q5 2.300 6 1.300Z"></path>
                <circle cx="14" cy="13" r="5.700" stroke="#fff" stroke-width="2.500"></circle>
              </svg>
            </button>
          </div>
        </div>

        <div class="filters">
          <button class="field" aria-expanded="true">
            <svg width="24" height="26" viewBox="0 0 24 26" fill="none" stroke="#607485" stroke-width="2" aria-hidden="true">
              <path d="M0 5.500h24M7 5V1.500H17V5M3 9.500H21V24.500H3ZM10 13v7M14 13v7"></path>
            </svg>
            <span>省份</span>
            <svg width="20" height="12" viewBox="0 0 20 12" fill="none" stroke="#607485" stroke-width="2" aria-hidden="true">
              <path d="M1 1L10 10.500L19 1"></path>
            </svg>
          </button>
          <button class="outlined">字段过滤</button>
          <button class="outlined">级联过滤</button>
          <p class="note">2. 选择要过滤的条件</p>
          <filter-popup class="popup" .options=${this.options}></filter-popup>
        </div>

        <div class="views">
          <button class=${classMap({ view: true, on: this.view === "chart" })} aria-label="图表" @click=${() => (this.view = "chart")}>
            <svg width="38" height="32" viewBox="0 0 38 32" fill="currentColor">
              <path d="M1 22h4v9H1zM12 14h4v17h-4zM22 18h5v13h-5zM33 10h4v21h-4z"></path>
              <path d="M3 15L14 8L25 10L35 3" fill="none" stroke="currentColor" stroke-width="1.500"></path>
              <circle cx="3" cy="15" r="2.300"></circle>
              <circle cx="14" cy="8" r="2.300"></circle>
              <circle cx="25" cy="10" r="2.300"></circle>
              <circle cx="35" cy="3" r="2.300"></circle>
            </svg>
          </button>
          <button class=${classMap({ view: true, on: this.view === "table" })} aria-label="表格" @click=${() => (this.view = "table")}>
            <svg width="38" height="32" viewBox="0 0 38 32" fill="none" stroke="currentColor" stroke-width="2">
              <rect x="1" y="1" width="36" height="30" rx="2"></rect>
              <path d="M1 1h36v7H1z" fill="currentColor" stroke="none"></path>
              <path d="M1 15h36M1 23h36M12.500 8v22M25.500 8v22"></path>
            </svg>
          </button>
        </div>

        <member-map></member-map>

        <div class="legend">
          <span>计数(求和):60</span>
          <span class="scale">${LEVELS.map((c) => html`<span class="step" style="background:${c}"></span>`)}</span>
          <span>840</span>
        </div>
      </main>
    `;
  }
}
